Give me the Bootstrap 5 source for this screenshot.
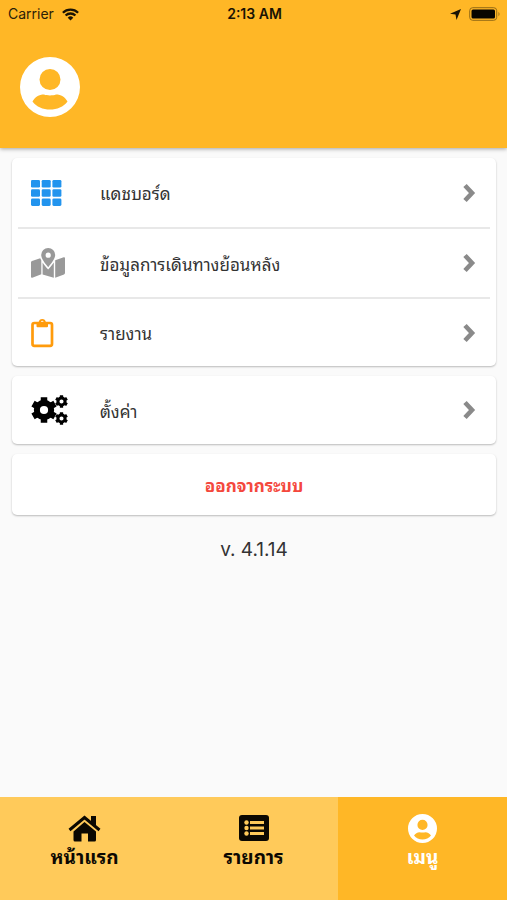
<!DOCTYPE html>
<html lang="th">
<head>
<meta charset="utf-8">
<meta name="viewport" content="width=device-width, initial-scale=1">
<title>เมนู</title>
<link href="https://cdn.jsdelivr.net/npm/bootstrap@5.3.0/dist/css/bootstrap.min.css" rel="stylesheet">
<style>
body { font-family: Inter, "Noto Sans Thai Looped", "Noto Sans Thai", Loma, Garuda, sans-serif; background: #fafafa; color: #333; }
svg { display: block; flex: none; }
.app-header { background: #ffb726; height: 148px; box-shadow: 0 1px 4px rgba(0, 0, 0, .35); }
.status-bar { height: 28px; padding: 0 6px 0 8px; color: #2b2008; font-size: 14px; line-height: 28px; }
.status-side { flex: 1 1 0; }
.status-time { color: #1a1304; font-weight: 600; }
.avatar { padding: 29px 20px 0; }
.menu-body { padding: 10px 11px 0 12px; gap: 10px; }
.panel { background: #fff; border-radius: 5px; box-shadow: 0 1px 2px rgba(0, 0, 0, .26); }
.menu-row { height: 69px; margin: 0 6px; padding: 0 14px 0 13px; color: #333; font-size: 17px; line-height: 24px; }
.menu-row + .menu-row { border-top: 2px solid #e8e8e8; }
.menu-row:nth-child(2) { height: 70px; }
.menu-row:only-child { height: 68px; }
.menu-icon { width: 69px; }
.menu-label { padding-top: 3px; }
.logout { height: 61px; border: 0; color: #f4483d; font-size: 17px; font-weight: 700; padding-top: 6px; }
.version { font-size: 19px; line-height: 24px; padding-top: 13px; }
.tab-bar { background: #ffca5a; height: 103px; }
.tab-link { flex: 1 1 0; padding-top: 15px; color: #0b0802; font-size: 19px; line-height: 28px; font-weight: 700; }
.tab-link.active { background: #ffb726; color: #fff; }
.tab-icon { height: 32px; }
</style>
<script src="https://cdn.jsdelivr.net/npm/bootstrap@5.3.0/dist/js/bootstrap.bundle.min.js"></script>
</head>
<body class="min-vh-100 d-flex flex-column">
<svg width="0" height="0" class="position-absolute" aria-hidden="true">
  <defs>
    <symbol id="person" viewBox="0 0 60 60"><path fill="currentColor" fill-rule="evenodd" d="M30 0a30 30 0 1 1 0 60a30 30 0 1 1 0-60zM30 12a10.500 10.500 0 1 0 0 21a10.500 10.500 0 1 0 0-21zM12.500 44.500C15 40 19 37.500 24 37.500C27 38.700 33 38.700 36 37.500C41 37.500 45 40 47.500 44.500C43.500 50 37 52.500 30 52.500S16.500 50 12.500 44.500z"/></symbol>
    <symbol id="chevron" viewBox="0 0 14 20"><path d="M3 2.500l7 7.500-7 7.500" fill="none" stroke="#8a8a8a" stroke-width="4.600"/></symbol>
    <symbol id="gear" viewBox="-12 -12 24 24">
      <circle r="6.600" fill="none" stroke="currentColor" stroke-width="5.600"/>
      <g stroke="currentColor" stroke-width="6" stroke-linejoin="round"><path id="teeth" d="M0-8v-3.700M0 8v3.700"/><use href="#teeth" transform="rotate(60)"/><use href="#teeth" transform="rotate(120)"/></g>
    </symbol>
  </defs>
</svg>

<header class="app-header">
  <div class="status-bar d-flex align-items-center">
    <div class="status-side d-flex align-items-center gap-2">
      <span>Carrier</span>
      <svg width="17" height="13" viewBox="0 0 17 13" fill="none" stroke="#1a1304" stroke-width="2.300"><path d="M.9 4.700a10.800 10.800 0 0 1 15.200 0M3.600 7.500a7 7 0 0 1 9.800 0"/><path d="M8.500 12.500L5.700 9.700a4 4 0 0 1 5.600 0z" fill="#1a1304" stroke="none"/></svg>
    </div>
    <span class="status-time">2:13 AM</span>
    <div class="status-side d-flex align-items-center justify-content-end gap-2">
      <svg width="11" height="11" viewBox="0 0 11 11"><path d="M11 0L6.500 11L5.500 5.500L0 4.700z" fill="#1a1304"/></svg>
      <svg width="32" height="14" viewBox="0 0 32 14"><rect x=".7" y=".7" width="27" height="12.600" rx="3" fill="none" stroke="#946a16"/><rect x="2.500" y="2.500" width="23.500" height="9" rx="1.500" fill="#080500"/><path d="M29.500 4.700q2 2.300 0 4.600z" fill="#946a16"/></svg>
    </div>
  </div>
  <div class="avatar"><svg width="60" height="60" color="#fff" role="img" aria-label="โปรไฟล์"><use href="#person"/></svg></div>
</header>

<main class="menu-body flex-grow-1 d-flex flex-column">
  <nav class="panel" aria-label="ข้อมูล">
    <a href="#dashboard" class="menu-row d-flex align-items-center text-decoration-none">
      <span class="menu-icon"><svg width="31" height="26" viewBox="0 0 31 26" fill="#2294ee"><g id="gridrow"><rect width="9" height="7.500" rx="1.300"/><rect x="10.700" width="9" height="7.500" rx="1.300"/><rect x="21.400" width="9" height="7.500" rx="1.300"/></g><use href="#gridrow" y="9.200"/><use href="#gridrow" y="18.400"/></svg></span>
      <span class="menu-label flex-grow-1">แดชบอร์ด</span>
      <svg width="14" height="20"><use href="#chevron"/></svg>
    </a>
    <a href="#history" class="menu-row d-flex align-items-center text-decoration-none">
      <span class="menu-icon"><svg width="34" height="30" viewBox="0 0 34 30" fill="#999"><path fill-rule="evenodd" d="M17.200 0a7 7 0 0 1 7 7c0 3.500-3.500 8-7 12.200C13.700 15 10.200 10.500 10.200 7a7 7 0 0 1 7-7zM17.200 4.600a2.600 2.600 0 1 0 0 5.200a2.600 2.600 0 1 0 0-5.200z"/><path d="M0 14.500a1.500 1.500 0 0 1 1-1.400L9.200 10.200L10.300 12.500V26.200L1.300 29.700Q0 30 0 28.800zM11.600 14.600C13.300 17.300 15.300 19.700 17.200 21.600C19.100 19.700 21 17.300 22.800 14.600V29.800L11.600 26.400zM24.200 12.300L32.700 9.200Q34 8.900 34 10.100V25a1.500 1.500 0 0 1-1 1.400L24.200 29.800z"/></svg></span>
      <span class="menu-label flex-grow-1">ข้อมูลการเดินทางย้อนหลัง</span>
      <svg width="14" height="20"><use href="#chevron"/></svg>
    </a>
    <a href="#reports" class="menu-row d-flex align-items-center text-decoration-none">
      <span class="menu-icon"><svg width="23" height="30" viewBox="0 0 23 30"><rect x="1.500" y="5" width="19.500" height="22.800" rx="1.800" fill="none" stroke="#ff9b0c" stroke-width="2.700"/><path fill="#ff9b0c" fill-rule="evenodd" d="M5.500 4H7.700a3.600 3.600 0 0 1 7.100 0H17v4.200a1 1 0 0 1-1 1H6.500a1 1 0 0 1-1-1zM11.250 2.800a1.300 1.300 0 1 0 0 2.600a1.300 1.300 0 1 0 0-2.600z"/></svg></span>
      <span class="menu-label flex-grow-1">รายงาน</span>
      <svg width="14" height="20"><use href="#chevron"/></svg>
    </a>
  </nav>

  <nav class="panel" aria-label="ตั้งค่า">
    <a href="#settings" class="menu-row d-flex align-items-center text-decoration-none">
      <span class="menu-icon"><svg width="38" height="30" viewBox="0 0 38 30" color="#000"><use href="#gear" width="26" height="26" y="2"/><use href="#gear" x="24" width="13" height="13"/><use href="#gear" x="24" y="17" width="13" height="13"/></svg></span>
      <span class="menu-label flex-grow-1">ตั้งค่า</span>
      <svg width="14" height="20"><use href="#chevron"/></svg>
    </a>
  </nav>

  <button type="button" class="panel logout w-100">ออกจากระบบ</button>
  <div class="version text-center">v. 4.1.14</div>
</main>

<nav class="tab-bar d-flex" aria-label="แถบเมนู">
  <a href="#home" class="tab-link d-flex flex-column align-items-center text-decoration-none">
    <span class="tab-icon d-flex align-items-center"><svg width="33" height="27" viewBox="0 0 33 27"><path d="M1.500 15L16.500 2.500L31.500 15" fill="none" stroke="currentColor" stroke-width="3"/><path d="M23 1h5v11l-5-4zM16.500 7L28 16.500V25a1.500 1.500 0 0 1-1.500 1.500H20V18.500H13.500V26.500H7A1.500 1.500 0 0 1 5.500 25V16.500z" fill="currentColor"/></svg></span>
    <span>หน้าแรก</span>
  </a>
  <a href="#list" class="tab-link d-flex flex-column align-items-center text-decoration-none">
    <span class="tab-icon d-flex align-items-center"><svg width="30" height="26" viewBox="0 0 30 26"><rect width="30" height="26" rx="3" fill="currentColor"/><g fill="#ffca5a"><circle cx="7.500" cy="7.500" r="2.200"/><circle cx="7.500" cy="13" r="2.200"/><circle cx="7.500" cy="18.500" r="2.200"/><path d="M11 6h14v3H11zM11 11.500h14v3H11zM11 17h14v3H11z"/></g></svg></span>
    <span>รายการ</span>
  </a>
  <a href="#menu" class="tab-link active d-flex flex-column align-items-center text-decoration-none" aria-current="page">
    <span class="tab-icon d-flex align-items-center"><svg width="29" height="29"><use href="#person"/></svg></span>
    <span>เมนู</span>
  </a>
</nav>
</body>
</html>
